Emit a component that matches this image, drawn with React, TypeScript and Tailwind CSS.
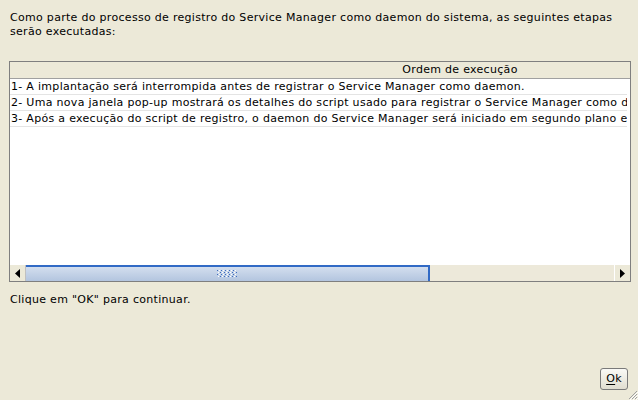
import React from "react";

const rows = [
  "1- A implantação será interrompida antes de registrar o Service Manager como daemon.",
  "2- Uma nova janela pop-up mostrará os detalhes do script usado para registrar o Service Manager como daemon do sistema.",
  "3- Após a execução do script de registro, o daemon do Service Manager será iniciado em segundo plano e a implantação continuará.",
];

function ArrowLeft() {
  return (
    <svg width="5" height="9" viewBox="0 0 5 9">
      <path d="M5 0 L0 4.5 L5 9 Z" fill="#000" />
    </svg>
  );
}

function ArrowRight() {
  return (
    <svg width="5" height="9" viewBox="0 0 5 9">
      <path d="M0 0 L5 4.5 L0 9 Z" fill="#000" />
    </svg>
  );
}

function Grip() {
  const dots = [];
  for (let r = 0; r < 4; r++) {
    for (let c = 0; c < 10; c++) {
      dots.push(
        <rect
          key={`${r}-${c}`}
          x={c * 2 + (r % 2)}
          y={r * 2}
          width="1"
          height="1"
          fill={(r + c) % 2 === 0 ? "#3d6cc0" : "#ffffff"}
        />
      );
    }
  }
  return (
    <svg width="20" height="8" viewBox="0 0 20 8">
      {dots}
    </svg>
  );
}

export default function App() {
  return (
    <div
      className="relative w-[638px] h-[400px] bg-[#ece9d8] text-[11px] text-black overflow-hidden tracking-[0.3px]"
      style={{ fontFamily: "Tahoma, 'DejaVu Sans', sans-serif" }}
    >
      <div className="flex flex-col px-[9px] pt-[11px]">
        <p className="pl-[1px] leading-[14px]">
          Como parte do processo de registro do Service Manager como daemon do sistema, as seguintes etapas
          <br />
          serão executadas:
        </p>

        <div className="mt-[22px] w-[622px] h-[221px] border border-[#7f7f7f] bg-white flex flex-col">
          <div className="flex-1 overflow-hidden">
            <div className="w-[900px]">
              <div className="h-[17px] bg-[#ece9d8] border-b border-[#a0a0a0] flex items-center justify-center leading-[16px]">
                Ordem de execução
              </div>
              {rows.map((r, i) => (
                <div
                  key={i}
                  className="h-[16px] border-b border-[#e4e4e4] pl-[1px] leading-[15px] whitespace-nowrap w-[617px] overflow-hidden"
                >
                  {r}
                </div>
              ))}
            </div>
          </div>

          <div className="h-[17px] flex bg-[#ece9d8] border-t border-[#ffffff]">
            <div className="w-[16px] h-full bg-[#ece9d8] border-r border-[#c0c0c0] flex items-center justify-center">
              <ArrowLeft />
            </div>
            <div className="flex-1 flex">
              <div className="w-[404px] h-full bg-gradient-to-b from-[#d3deee] to-[#b3c5df] border-t-2 border-r-2 border-[#316ac5] flex items-center justify-center">
                <Grip />
              </div>
              <div className="flex-1 bg-[#ede9da]" />
            </div>
            <div className="w-[16px] h-full bg-[#ece9d8] border-l border-[#ffffff] flex items-center justify-center">
              <ArrowRight />
            </div>
          </div>
        </div>

        <p className="mt-[11px] pl-[1px] leading-[14px]">Clique em "OK" para continuar.</p>
      </div>

      <div className="absolute right-[10px] bottom-[10px]">
        <button className="w-[28px] h-[22px] rounded-[3px] border border-[#7a7a7a] bg-gradient-to-b from-[#fafaf6] to-[#e0ddd0] flex items-center justify-center text-[11px]">
          <span className="underline underline-offset-2">O</span>k
        </button>
      </div>

      <svg className="absolute right-0 bottom-0" width="12" height="12" viewBox="0 0 12 12">
        <path d="M11 3 L3 11 M11 6 L6 11 M11 9 L9 11" stroke="#a0a0a0" strokeWidth="1" />
        <path d="M12 4 L4 12 M12 7 L7 12 M12 10 L10 12" stroke="#ffffff" strokeWidth="1" />
      </svg>
    </div>
  );
}
